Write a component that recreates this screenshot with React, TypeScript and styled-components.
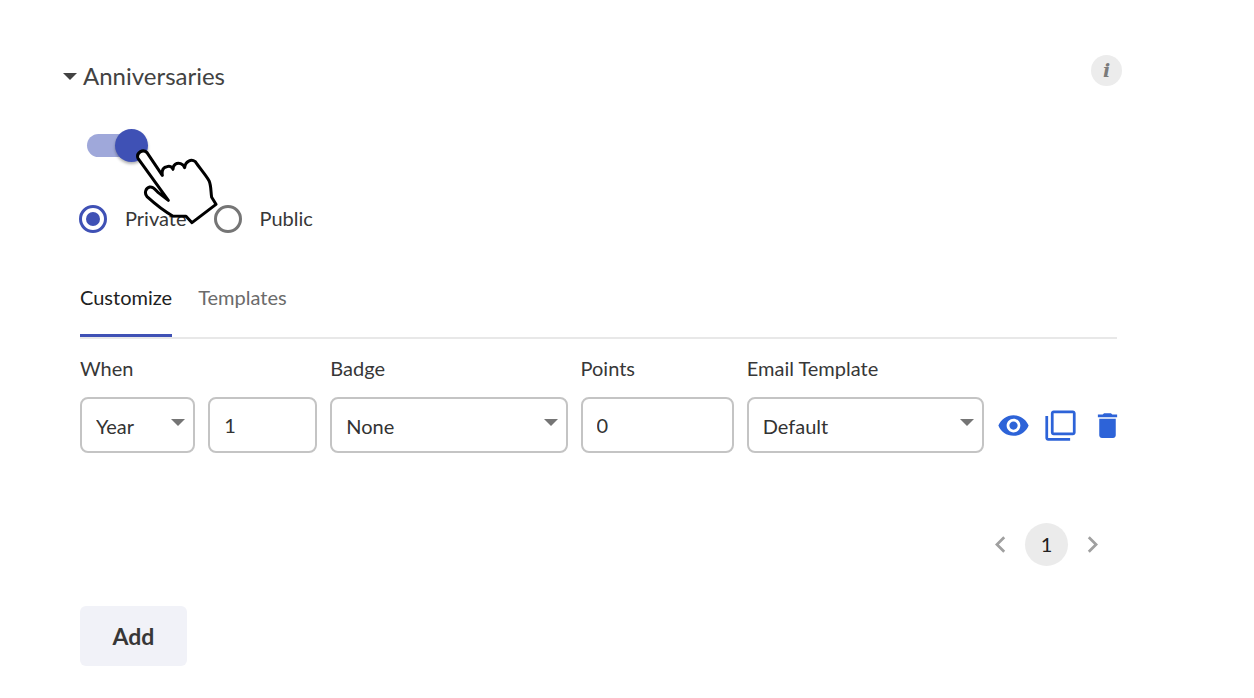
import React, { useState } from "react";
import styled, { createGlobalStyle } from "styled-components";
import {
  MdVisibility,
  MdFilterNone,
  MdDelete,
  MdChevronLeft,
  MdChevronRight,
} from "react-icons/md";

const GlobalStyle = createGlobalStyle`
  *, *::before, *::after { box-sizing: border-box; }
  body {
    margin: 0;
    background: #fff;
    color: #373737;
    font: 20px/24px Lato, "Open Sans", sans-serif;
  }
  button, input, select { font: inherit; color: inherit; }
`;

const Page = styled.main`
  padding: 55px 137px 32px 80px;
`;

const Header = styled.header`
  display: flex;
  align-items: flex-start;
  justify-content: space-between;
  margin: 0 -5px 0 -17px;
`;

const Title = styled.h2`
  margin: 6px 0 0;
  font-size: 24px;
  line-height: 30px;
  font-weight: 400;
`;

const TitleButton = styled.button`
  display: flex;
  align-items: center;
  gap: 6px;
  padding: 0;
  border: 0;
  background: none;
  color: #424242;
  cursor: pointer;

  & > svg {
    margin-top: 2px;
  }
`;

const Caret = styled.svg`
  width: 14px;
  height: 8px;
  fill: currentColor;
`;

const InfoButton = styled.button`
  width: 31px;
  height: 31px;
  padding: 0;
  border: 0;
  border-radius: 50%;
  background: #ececec;
  color: #7b7b7b;
  font: italic 700 19px/31px "DejaVu Serif", serif;
  cursor: pointer;
`;

const SwitchRow = styled.div`
  position: relative;
  display: flex;
  align-items: center;
  height: 33px;
  margin: 38px 0 0 7px;
`;

const Switch = styled.input`
  appearance: none;
  display: flex;
  align-items: center;
  width: 57px;
  height: 23px;
  margin: 0;
  border-radius: 12px;
  background: #bdbdbd;
  cursor: pointer;

  &::before {
    content: "";
    flex: none;
    width: 33px;
    height: 33px;
    border-radius: 50%;
    background: #fafafa;
    box-shadow: 0 2px 3px rgba(0, 0, 0, 0.3);
  }
  &:checked {
    background: #9fa8da;
  }
  &:checked::before {
    margin-left: 28px;
    background: #3f51b5;
  }
`;

const Hand = styled.svg`
  position: absolute;
  z-index: 1;
  left: 48px;
  top: 19px;
  width: 84px;
  height: 77px;
  pointer-events: none;
`;

const RadioGroup = styled.div`
  display: flex;
  gap: 27px;
  margin: 43px 0 0 -1px;
`;

const RadioLabel = styled.label`
  display: flex;
  align-items: flex-start;
  gap: 18px;
  line-height: 26px;
  cursor: pointer;
`;

const Radio = styled.input`
  appearance: none;
  display: grid;
  place-items: center;
  width: 28px;
  height: 28px;
  margin: 0;
  border: 3px solid #757575;
  border-radius: 50%;

  &:checked {
    border-color: #3f51b5;
  }
  &:checked::before {
    content: "";
    width: 14px;
    height: 14px;
    border-radius: 50%;
    background: #3f51b5;
  }
`;

const Tabs = styled.div`
  display: flex;
  gap: 26px;
  margin-top: 52px;
  box-shadow: inset 0 -2px #e8e8e8;
`;

const Tab = styled.button<{ $active: boolean }>`
  padding: 0 0 25px;
  border: 0;
  border-bottom: 3px solid ${(p) => (p.$active ? "#3f51b5" : "transparent")};
  margin-bottom: 2px;
  background: none;
  color: ${(p) => (p.$active ? "#212121" : "#6b6b6b")};
  cursor: pointer;
`;

const Rule = styled.div`
  display: grid;
  grid-template-columns: 237fr 237fr 153fr 237fr 120px;
  gap: 13px;
  align-items: end;
  margin-top: 17px;
`;

const Field = styled.div`
  display: flex;
  flex-direction: column;
  gap: 17px;
  min-width: 0;
`;

const Pair = styled.div`
  display: grid;
  grid-template-columns: 115fr 109fr;
  gap: 13px;
`;

const SelectBox = styled.div`
  display: grid;
  align-items: center;
  color: #757575;

  & > * {
    grid-area: 1 / 1;
  }
  & > svg {
    justify-self: end;
    margin: 0 10px 4px 0;
    pointer-events: none;
  }
`;

const Select = styled.select`
  appearance: none;
  width: 100%;
  height: 56px;
  padding: 2px 32px 0 14px;
  border: 2px solid #c4c4c4;
  border-radius: 8px;
  background: #fff;
  color: #333;
`;

const NumberInput = styled.input`
  width: 100%;
  height: 56px;
  padding: 0 14px;
  border: 2px solid #c4c4c4;
  border-radius: 8px;
  background: #fff;
  color: #333;
`;

const Actions = styled.div`
  display: flex;
  align-items: center;
  gap: 14px;
  height: 56px;
  margin-right: -7px;
`;

const IconButton = styled.button<{ $tone: string }>`
  display: flex;
  padding: 0;
  border: 0;
  background: none;
  color: ${(p) => p.$tone};
  font-size: 33px;
  cursor: pointer;
`;

const Pagination = styled.nav`
  display: flex;
  align-items: center;
  justify-content: flex-end;
  gap: 8px;
  margin: 70px 8px 0 0;
`;

const PageNumber = styled.button`
  width: 43px;
  height: 43px;
  padding: 0 0 2px;
  border: 0;
  border-radius: 50%;
  background: #ebebeb;
  color: #212121;
  cursor: pointer;
`;

const AddButton = styled.button`
  min-width: 107px;
  height: 60px;
  margin-top: 40px;
  padding: 0 32px;
  border: 0;
  border-radius: 6px;
  background: #f1f2f8;
  font-size: 23px;
  font-weight: 700;
  cursor: pointer;
`;

const DownCaret = () => (
  <Caret viewBox="0 0 14 8" aria-hidden="true">
    <path d="M0 0h14L7 7z" />
  </Caret>
);

const HandPointer = () => (
  <Hand viewBox="195 99 252 231" aria-hidden="true">
    <path
      d="M204 130C198 114 218 100 231 113L277 181C274 164 282 155 291 155C299 152 306 155 309 163C309 149 320 142 332 146C338 148 342 152 344 158C346 138 364 131 376 140C388 158 407 180 417 197C424 213 422 230 425 247L438 268L366 323L348 304L308 303C280 287 252 264 231 245C222 234 227 219 239 216C250 214 256 224 265 233L295 256Z"
      fill="#fff"
      stroke="#000"
      strokeWidth="9"
      strokeLinejoin="round"
    />
  </Hand>
);

const BLUE = "#2d63d8";
const GREY = "#a0a0a0";

export default function App() {
  const [open, setOpen] = useState(true);
  const [tab, setTab] = useState("Customize");

  return (
    <>
      <GlobalStyle />
      <Page>
        <Header>
          <Title>
            <TitleButton aria-expanded={open} onClick={() => setOpen(!open)}>
              <DownCaret />
              Anniversaries
            </TitleButton>
          </Title>
          <InfoButton aria-label="Information">i</InfoButton>
        </Header>
        {open && (
          <>
            <SwitchRow>
              <Switch type="checkbox" role="switch" aria-label="Enable anniversaries" defaultChecked />
              <HandPointer />
            </SwitchRow>
            <RadioGroup role="radiogroup" aria-label="Visibility">
              <RadioLabel>
                <Radio type="radio" name="visibility" defaultChecked />
                Private
              </RadioLabel>
              <RadioLabel>
                <Radio type="radio" name="visibility" />
                Public
              </RadioLabel>
            </RadioGroup>
            <Tabs role="tablist">
              {["Customize", "Templates"].map((name) => (
                <Tab
                  key={name}
                  role="tab"
                  aria-selected={tab === name}
                  $active={tab === name}
                  onClick={() => setTab(name)}
                >
                  {name}
                </Tab>
              ))}
            </Tabs>
            <Rule>
              <Field>
                <label htmlFor="unit">When</label>
                <Pair>
                  <SelectBox>
                    <Select id="unit">
                      <option>Year</option>
                    </Select>
                    <DownCaret />
                  </SelectBox>
                  <NumberInput aria-label="Number of years" inputMode="numeric" defaultValue="1" />
                </Pair>
              </Field>
              <Field>
                <label htmlFor="badge">Badge</label>
                <SelectBox>
                  <Select id="badge">
                    <option>None</option>
                  </Select>
                  <DownCaret />
                </SelectBox>
              </Field>
              <Field>
                <label htmlFor="points">Points</label>
                <NumberInput id="points" inputMode="numeric" defaultValue="0" />
              </Field>
              <Field>
                <label htmlFor="template">Email Template</label>
                <SelectBox>
                  <Select id="template">
                    <option>Default</option>
                  </Select>
                  <DownCaret />
                </SelectBox>
              </Field>
              <Actions>
                <IconButton $tone={BLUE} aria-label="Preview"><MdVisibility /></IconButton>
                <IconButton $tone={BLUE} aria-label="Duplicate"><MdFilterNone /></IconButton>
                <IconButton $tone={BLUE} aria-label="Delete"><MdDelete /></IconButton>
              </Actions>
            </Rule>
            <Pagination aria-label="Pages">
              <IconButton $tone={GREY} aria-label="Previous page"><MdChevronLeft /></IconButton>
              <PageNumber aria-current="page">1</PageNumber>
              <IconButton $tone={GREY} aria-label="Next page"><MdChevronRight /></IconButton>
            </Pagination>
            <AddButton>Add</AddButton>
          </>
        )}
      </Page>
    </>
  );
}
